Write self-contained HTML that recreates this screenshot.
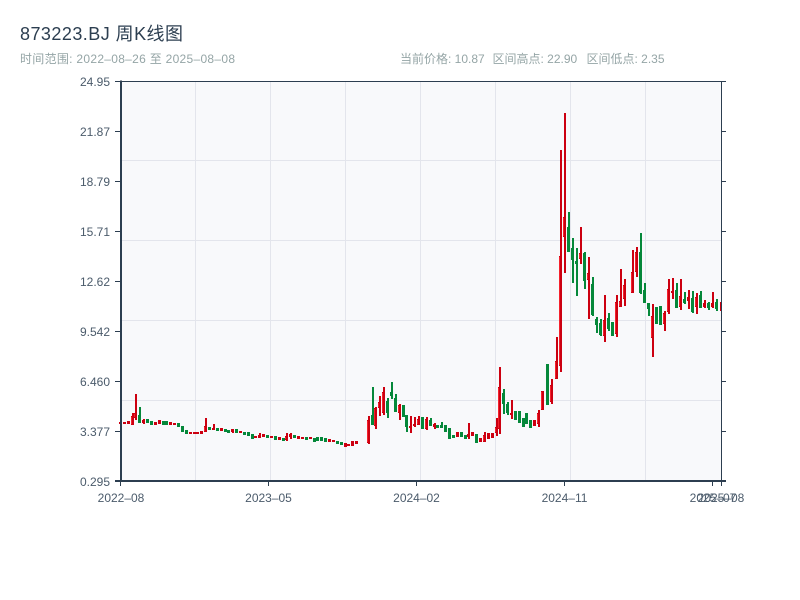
<!DOCTYPE html>
<html lang="zh">
<head>
<meta charset="utf-8">
<title>873223.BJ 周K线图</title>
<style>
html,body{margin:0;padding:0;background:#fff;width:800px;height:600px;overflow:hidden}
svg{display:block}
text{font-family:"Liberation Sans","Noto Sans CJK SC",sans-serif}
.t{font-size:18px;fill:#2c3e50}
.s{font-size:12px;fill:#95a5a6}
.a{font-size:12px;fill:#4b5b6b}
.rw,.rb{stroke:#cc0010;fill:none}
.gw,.gb{stroke:#05883a;fill:none}
.rw,.gw{stroke-width:2}
.rb,.gb{stroke-width:3}
.ri{stroke:#f5222d;stroke-width:1;fill:none}
</style>
</head>
<body>
<svg width="800" height="600" viewBox="0 0 800 600" xmlns="http://www.w3.org/2000/svg">
<rect width="800" height="600" fill="#fff"/>
<text class="t" x="20" y="40" textLength="163">873223.BJ 周K线图</text>
<text class="s" x="20" y="63" textLength="215">时间范围: 2022–08–26 至 2025–08–08</text>
<text class="s" x="400" y="63">当前价格: 10.87</text>
<text class="s" x="492.5" y="63">区间高点: 22.90</text>
<text class="s" x="586.5" y="63">区间低点: 2.35</text>

<rect x="121" y="81" width="600" height="400" fill="#f8f9fb"/>
<path d="M195.500 81V481M270.500 81V481M345.500 81V481M420.500 81V481M495.500 81V481M570.500 81V481M645.500 81V481M121 160.500H721M121 240.500H721M121 320.500H721M121 400.500H721" stroke="#e3e5ec" stroke-width="1" fill="none"/>

<path class="gw" d="M140 407V423M148 419V423M152 421V425M164 421V425M167 421V425M179 423V427M183 426V432M187 430V434M210 427V430M218 428V431M226 429V432M229 430V433M237 429V433M245 432V435M249 432V436M253 434V439M268 435V438M276 436V440M284 438V441M295 435V438M307 437V440M315 438V442M318 437V441M322 437V441M326 438V442M338 441V444M342 442V445M373 387V425M388 398V418M392 382V399M396 394V412M404 405V417M407 415V432M423 417V429M431 418V426M438 425V428M442 422V428M446 425V432M450 428V439M454 435V438M462 432V437M466 435V439M477 434V443M504 389V414M508 402V415M516 411V420M520 411V423M524 418V427M527 413V424M531 420V428M548 364V405M569 212V252M573 238V283M577 248V296M585 252V289M593 277V316M597 317V333M601 319V336M609 313V331M613 322V336M641 233V294M645 283V303M649 303V316M657 307V324M661 306V325M677 283V308M685 292V304M693 291V313M701 291V308M709 302V310M717 299V311"/>
<path class="gb" transform="translate(-.5 0)" d="M140 415V423M148 419V423M152 421V425M164 421V425M167 421V425M179 423V427M183 426V432M187 430V434M210 427V430M218 428V431M226 429V432M229 430V433M237 429V433M245 432V435M249 432V436M253 434V439M268 435V438M276 436V440M284 438V441M295 435V438M307 437V440M315 438V442M318 437V441M322 437V441M326 438V442M338 441V444M342 442V445M373 415V425M388 401V413M392 392V396M396 398V412M404 405V417M407 415V427M423 417V429M431 420V426M438 425V428M442 425V428M446 425V432M450 428V439M454 435V438M462 432V437M466 435V439M477 434V443M504 393V404M508 404V413M516 411V420M520 411V423M524 418V427M527 413V424M531 420V428M548 364V405M569 227V252M573 248V260M577 261V264M585 253V281M593 284V315M597 319V325M601 323V335M609 318V329M613 322V336M641 252V293M645 290V303M649 303V309M657 307V324M661 306V325M677 290V308M685 299V303M693 298V312M701 295V308M709 303V308M717 302V309"/>

<path class="rw" d="M121 422V424M125 422V424M129 421V424M133 413V425M136 394V420M144 419V424M156 422V425M160 420V424M171 422V425M175 423V425M191 432V434M195 432V434M198 432V434M202 431V434M206 418V432M214 424V430M222 428V431M233 429V433M241 431V433M256 436V438M260 433V438M264 434V437M272 436V438M280 437V440M287 433V441M291 433V439M299 436V439M303 437V439M311 437V439M330 439V442M334 440V442M346 443V447M349 444V446M353 441V446M357 441V444M369 416V444M376 407V429M380 396V416M384 387V415M400 404V420M411 416V433M415 417V427M419 416V425M427 417V430M435 423V429M458 432V437M469 423V439M473 432V436M481 438V442M485 432V442M489 433V439M493 433V438M497 418V436M500 367V434M512 400V419M535 420V426M539 410V427M543 391V410M552 379V404M557 337V379M561 150V372M565 113V273M581 227V264M589 257V319M605 295V342M617 295V337M621 269V307M625 279V306M633 250V293M637 247V277M653 304V357M665 311V331M669 279V314M673 278V299M681 279V310M689 290V309M697 293V314M705 300V308M713 292V308M721 302V311"/>
<path class="rb" transform="translate(-.5 0)" d="M121 422V424M125 422V424M129 421V424M133 416V425M136 413V418M144 420V423M156 422V425M160 420V424M171 422V425M175 423V425M191 432V434M195 432V434M198 432V434M202 431V434M206 426V432M214 428V430M222 428V431M233 429V432M241 431V433M256 436V438M260 435V438M264 434V437M272 436V438M280 437V440M287 436V440M291 434V437M299 436V439M303 437V439M311 437V439M330 439V442M334 440V442M346 443V447M349 444V446M353 441V446M357 441V444M369 420V443M376 408V426M380 402V408M384 392V413M400 405V413M411 426V428M415 424V426M419 419V425M427 419V429M435 424V427M458 432V437M469 434V437M473 432V436M481 438V442M485 435V442M489 433V439M493 433V438M497 427V433M500 387V429M512 413V415M535 420V426M539 413V424M543 391V410M552 385V402M557 361V379M561 256V366M565 217V237M581 253V259M589 273V280M605 320V336M617 302V334M621 301V307M625 285V299M633 272V293M637 252V272M653 316V338M665 313V324M669 289V312M673 291V293M681 296V307M689 297V301M697 297V307M705 303V307M713 303V307"/>
<path class="ri" transform="translate(-1.500 0)" d="M133 417V424M136 414V417M206 427V431M287 437V439M369 421V442M376 409V425M380 403V407M384 393V412M400 406V412M419 420V424M427 420V428M485 436V441M497 428V432M500 388V428M539 414V423M543 392V409M552 386V401M557 362V378M561 257V365M565 218V236M581 254V258M589 274V279M605 321V335M617 303V333M621 302V306M625 286V298M633 273V292M637 253V271M653 317V337M665 314V323M669 290V311M681 297V306M697 298V306"/>

<g stroke="#2c3e50" fill="none">
<path d="M115 81.500H726M721.500 81V481M115 131.500H121M115 181.500H121M115 231.500H121M115 281.500H121M115 331.500H121M115 381.500H121M115 431.500H121M721 131.500H726M721 181.500H726M721 231.500H726M721 281.500H726M721 331.500H726M721 381.500H726M721 431.500H726M721 481.500H726" stroke-width="1"/>
<path d="M121 80.500V482" stroke-width="2"/>
<path d="M115 481H726" stroke-width="2"/>
<path d="M120.500 481V486M268.500 481V486M416.500 481V486M564.500 481V486M712.500 481V486M721.500 481V486" stroke-width="1"/>
</g>

<g class="a" text-anchor="end">
<text class="a" x="110" y="86">24.95</text>
<text class="a" x="110" y="136">21.87</text>
<text class="a" x="110" y="186">18.79</text>
<text class="a" x="110" y="236">15.71</text>
<text class="a" x="110" y="286">12.62</text>
<text class="a" x="110" y="336">9.542</text>
<text class="a" x="110" y="386">6.460</text>
<text class="a" x="110" y="436">3.377</text>
<text class="a" x="110" y="486">0.295</text>
</g>
<g text-anchor="middle">
<text class="a" x="121" y="502">2022–08</text>
<text class="a" x="268.500" y="502">2023–05</text>
<text class="a" x="416.500" y="502">2024–02</text>
<text class="a" x="564.500" y="502">2024–11</text>
<text class="a" x="713" y="502">2025–07</text>
<text class="a" x="721" y="502">2025–08</text>
</g>
</svg>
</body>
</html>
